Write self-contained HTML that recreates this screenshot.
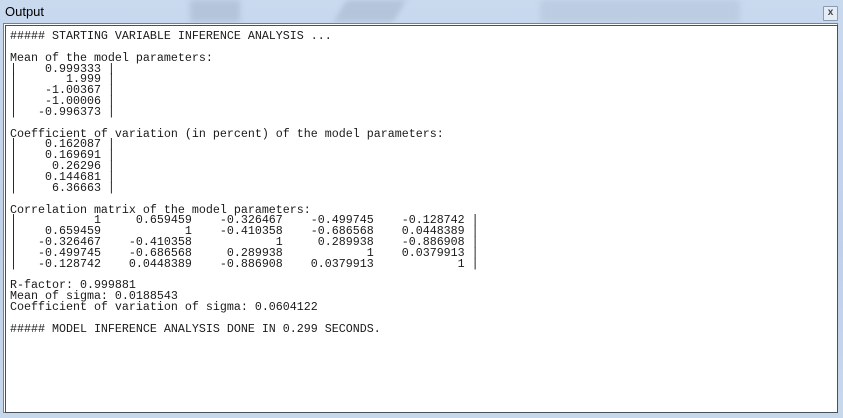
<!DOCTYPE html>
<html><head><meta charset="utf-8"><style>
html,body{margin:0;padding:0}
body{width:843px;height:418px;overflow:hidden;position:relative;background:linear-gradient(#c9d9ee,#bfd1e8 60%,#c8d8ec);font-family:"Liberation Sans",sans-serif}
.title{position:absolute;left:5px;top:4px;font-size:13px;color:#000}
.blur{position:absolute;top:0;height:22px;background:rgba(120,135,160,0.25);filter:blur(3px)}
.close{position:absolute;left:823px;top:6px;width:13px;height:13px;border:1px solid #8a9ab2;background:#e4ecf6;font-size:10px;font-weight:bold;line-height:12px;text-align:center;color:#444;border-radius:1px}
.box{position:absolute;left:3px;top:23px;width:833px;height:388px;border:1px solid #7a7f88;background:#fff}
.box2{position:absolute;left:5px;top:25px;width:831px;height:386px;border:1px solid #4a5058;background:#fff}
pre{position:absolute;left:10px;top:31px;margin:0;font-family:"Liberation Mono",monospace;font-size:11.67px;line-height:10.85px;color:#1a1a1a}
</style></head><body>
<div class="blur" style="left:190px;width:50px"></div>
<div class="blur" style="left:340px;width:60px;transform:skewX(-30deg)"></div>
<div class="blur" style="left:540px;width:200px;opacity:.6"></div>
<div class="title">Output</div>
<div class="close">x</div>
<div class="box"></div>
<div class="box2"></div>
<pre>##### STARTING VARIABLE INFERENCE ANALYSIS ...

Mean of the model parameters:
|    0.999333 |
|       1.999 |
|    -1.00367 |
|    -1.00006 |
|   -0.996373 |

Coefficient of variation (in percent) of the model parameters:
|    0.162087 |
|    0.169691 |
|     0.26296 |
|    0.144681 |
|     6.36663 |

Correlation matrix of the model parameters:
|           1     0.659459    -0.326467    -0.499745    -0.128742 |
|    0.659459            1    -0.410358    -0.686568    0.0448389 |
|   -0.326467    -0.410358            1     0.289938    -0.886908 |
|   -0.499745    -0.686568     0.289938            1    0.0379913 |
|   -0.128742    0.0448389    -0.886908    0.0379913            1 |

R-factor: 0.999881
Mean of sigma: 0.0188543
Coefficient of variation of sigma: 0.0604122

##### MODEL INFERENCE ANALYSIS DONE IN 0.299 SECONDS.</pre>
</body></html>
